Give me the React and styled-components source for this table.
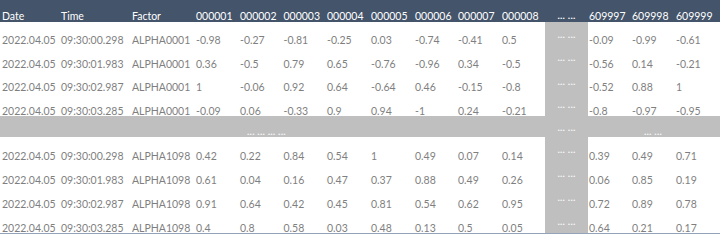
import React from 'react';
import styled, {createGlobalStyle} from 'styled-components';

const GlobalStyle = createGlobalStyle`
	html, body {
		margin: 0;
		padding: 0;
		background: #ffffff;
	}
	body {
		font-family: Lato, "Open Sans", sans-serif;
	}
`;

const COLUMNS = '59px 71px 64px 44px 43.5px 43.5px 44px 44px 43px 44px 45px 43px 43px 44px 45px';
const GAP_COL = 11;

const header = ['Date', 'Time', 'Factor', '000001', '000002', '000003', '000004', '000005', '000006', '000007', '000008', '', '609997', '609998', '609999'];

const topRows = [
	['09:30:00.298', 'ALPHA0001', '-0.98', '-0.27', '-0.81', '-0.25', '0.03', '-0.74', '-0.41', '0.5', '-0.09', '-0.99', '-0.61'],
	['09:30:01.983', 'ALPHA0001', '0.36', '-0.5', '0.79', '0.65', '-0.76', '-0.96', '0.34', '-0.5', '-0.56', '0.14', '-0.21'],
	['09:30:02.987', 'ALPHA0001', '1', '-0.06', '0.92', '0.64', '-0.64', '0.46', '-0.15', '-0.8', '-0.52', '0.88', '1'],
	['09:30:03.285', 'ALPHA0001', '-0.09', '0.06', '-0.33', '0.9', '0.94', '-1', '0.24', '-0.21', '-0.8', '-0.97', '-0.95'],
];

const bottomRows = [
	['09:30:00.298', 'ALPHA1098', '0.42', '0.22', '0.84', '0.54', '1', '0.49', '0.07', '0.14', '0.39', '0.49', '0.71'],
	['09:30:01.983', 'ALPHA1098', '0.61', '0.04', '0.16', '0.47', '0.37', '0.88', '0.49', '0.26', '0.06', '0.85', '0.19'],
	['09:30:02.987', 'ALPHA1098', '0.91', '0.64', '0.42', '0.45', '0.81', '0.54', '0.62', '0.95', '0.72', '0.89', '0.78'],
	['09:30:03.285', 'ALPHA1098', '0.4', '0.8', '0.58', '0.03', '0.48', '0.13', '0.5', '0.05', '0.64', '0.21', '0.17'],
];

const Sheet = styled.div`
	width: 720px;
	border-bottom: 1px solid #95a3b8;
`;

const Row = styled.div`
	display: grid;
	grid-template-columns: ${COLUMNS};
	height: ${p => p.$height}px;
	background: ${p => p.$bg || 'transparent'};
`;

const Cell = styled.div`
	display: flex;
	align-items: flex-end;
	padding-left: ${p => p.$pad}px;
	font-size: 10.5px;
	line-height: 1;
	color: #7f7f7f;
	white-space: nowrap;
`;

const HeadCell = styled(Cell)`
	color: #ffffff;
	padding-bottom: 1px;
`;

const GapCell = styled.div`
	display: flex;
	align-items: ${p => p.$head ? 'flex-end' : 'center'};
	justify-content: center;
	background: ${p => p.$head ? 'transparent' : '#bfbfbf'};
	padding-bottom: ${p => p.$head ? '2px' : '0'};
`;

const Dots = styled.span`
	font-size: 10px;
	font-weight: 700;
	letter-spacing: 0.2px;
	line-height: 1;
	color: ${p => p.$head ? '#ffffff' : '#f7f7f7'};
`;

const BandCell = styled.div`
	display: flex;
	align-items: ${p => p.$center ? 'center' : 'flex-end'};
	justify-content: ${p => p.$left ? 'flex-start' : 'center'};
	padding-left: ${p => p.$left ? 9 : 0}px;
	padding-bottom: ${p => p.$center ? 0 : 1}px;
	white-space: nowrap;
`;

const padFor = i => (i >= 12 ? 1 : 2);

function DataRow({cells, height}) {
	const values = ['2022.04.05', ...cells];
	const list = [...values.slice(0, GAP_COL), null, ...values.slice(GAP_COL)];
	return (
		<Row $height={height}>
			{list.map((v, i) =>
				i === GAP_COL
					? <GapCell key={i}><Dots>... ...</Dots></GapCell>
					: <Cell key={i} $pad={padFor(i)}>{v}</Cell>
			)}
		</Row>
	);
}

function BandRow() {
	return (
		<Row $height={21} $bg="#bfbfbf">
			{header.map((h, i) => {
				if (i === 4) return <BandCell key={i} $left><Dots>... ... ... ...</Dots></BandCell>;
				if (i === GAP_COL) return <BandCell key={i} $center><Dots>... ...</Dots></BandCell>;
				if (i === 13) return <BandCell key={i}><Dots>... ...</Dots></BandCell>;
				return <BandCell key={i}/>;
			})}
		</Row>
	);
}

export default function App() {
	return (
		<>
			<GlobalStyle/>
			<Sheet>
				<Row $height={22} $bg="#44546a">
					{header.map((h, i) =>
						i === GAP_COL
							? <GapCell key={i} $head><Dots $head>... ...</Dots></GapCell>
							: <HeadCell key={i} $pad={padFor(i)}>{h}</HeadCell>
					)}
				</Row>
				{topRows.map((r, i) => <DataRow key={i} cells={r} height={23.5}/>)}
				<BandRow/>
				{bottomRows.map((r, i) => <DataRow key={i} cells={r} height={24}/>)}
			</Sheet>
		</>
	);
}
